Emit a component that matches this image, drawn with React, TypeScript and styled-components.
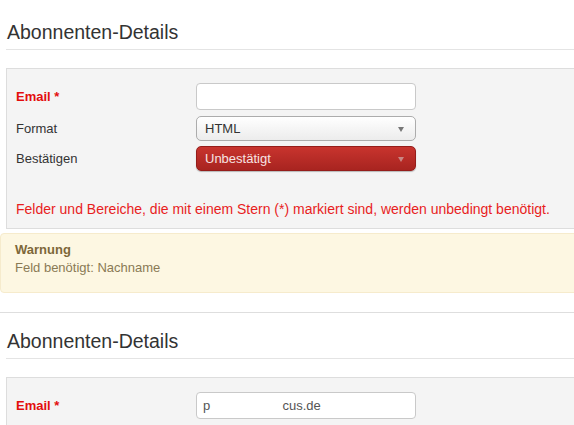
import React, { FunctionComponent } from 'react'
import styled, { createGlobalStyle } from 'styled-components'

const GlobalStyle = createGlobalStyle`
  html, body {
    margin: 0;
    padding: 0;
    background: #ffffff;
    overflow: hidden;
  }
  body {
    font-family: "Liberation Sans", Arial, Helvetica, sans-serif;
    font-size: 13px;
    color: #333333;
  }
`

const Page = styled.div`
  width: 574px;
  overflow: hidden;
`

const SectionTitle = styled.h2<{ $top: number }>`
  margin: 0 0 0 6px;
  padding: ${p => p.$top}px 0 6px 1px;
  font-size: 19.5px;
  line-height: 22px;
  font-weight: normal;
  color: #333333;
  border-bottom: 1px solid #e4e4e4;
`

const Panel = styled.div`
  margin: 18px -20px 0 6px;
  padding: 14px 0 11px 9px;
  background-color: #f4f4f4;
  border: 1px solid #dddddd;
  border-right: none;
`

const Row = styled.div<{ $gap?: number }>`
  display: flex;
  align-items: center;
  margin-bottom: ${p => p.$gap ?? 0}px;
`

const Label = styled.label<{ $required?: boolean }>`
  width: 180px;
  flex-shrink: 0;
  font-size: 13px;
  font-weight: ${p => (p.$required ? 'bold' : 'normal')};
  color: ${p => (p.$required ? '#e30d0d' : '#333333')};
`

const TextInput = styled.input`
  box-sizing: border-box;
  width: 220px;
  height: 27px;
  margin: 0;
  padding: 0 6px;
  border: 1px solid #c9c9c9;
  border-radius: 4px;
  background: #ffffff;
  font-family: "Liberation Sans", Arial, sans-serif;
  font-size: 13px;
  color: #555555;
  white-space: pre;
  outline: none;
`

const SelectBox = styled.div<{ $danger?: boolean }>`
  position: relative;
  box-sizing: border-box;
  width: 220px;
  height: 25px;
  padding: 0 0 0 8px;
  display: flex;
  align-items: center;
  border-radius: 5px;
  border: 1px solid ${p => (p.$danger ? '#951d1a' : '#acacac')};
  background: ${p =>
    p.$danger
      ? 'linear-gradient(#c8342e, #a82420)'
      : 'linear-gradient(#ffffff, #ececec)'};
  box-shadow: ${p => (p.$danger ? '0 1px 1px rgba(0,0,0,0.25)' : 'none')};
  color: ${p => (p.$danger ? '#f7e3e2' : '#333333')};
  font-size: 13px;
`

const Caret = styled.span<{ $danger?: boolean }>`
  position: absolute;
  right: 11px;
  top: 50%;
  margin-top: -2px;
  width: 0;
  height: 0;
  border-left: 3.5px solid transparent;
  border-right: 3.5px solid transparent;
  border-top: 5px solid ${p => (p.$danger ? '#c98683' : '#777777')};
`

const RequiredNote = styled.p`
  margin: 30px 0 0 0;
  font-size: 14px;
  line-height: 16px;
  color: #e81d1d;
`

const Warning = styled.div`
  margin: 4px -20px 0 0;
  padding: 7px 0 15px 14px;
  background-color: #fdf7e2;
  border: 1px solid #f6ebcc;
  border-radius: 4px;
  line-height: 18px;
  font-size: 13px;
  color: #8a7a55;
`

const WarningTitle = styled.strong`
  display: block;
  color: #7d6839;
  font-weight: bold;
`

const Divider = styled.hr`
  margin: 19px 0 0 0;
  border: none;
  border-top: 1px solid #dedede;
  height: 0;
`

const App: FunctionComponent = () => (
  <Page>
    <GlobalStyle />
    <SectionTitle $top={21}>Abonnenten-Details</SectionTitle>
    <Panel>
      <Row $gap={6}>
        <Label $required>Email *</Label>
        <TextInput defaultValue="" />
      </Row>
      <Row $gap={5}>
        <Label>Format</Label>
        <SelectBox>
          HTML
          <Caret />
        </SelectBox>
      </Row>
      <Row>
        <Label>Bestätigen</Label>
        <SelectBox $danger>
          Unbestätigt
          <Caret $danger />
        </SelectBox>
      </Row>
      <RequiredNote>
        Felder und Bereiche, die mit einem Stern (*) markiert sind, werden unbedingt benötigt.
      </RequiredNote>
    </Panel>
    <Warning>
      <WarningTitle>Warnung</WarningTitle>
      Feld benötigt: Nachname
    </Warning>
    <Divider />
    <SectionTitle $top={17}>Abonnenten-Details</SectionTitle>
    <Panel>
      <Row>
        <Label $required>Email *</Label>
        <TextInput readOnly value={'p                    cus.de'} />
      </Row>
    </Panel>
  </Page>
)

export default App
